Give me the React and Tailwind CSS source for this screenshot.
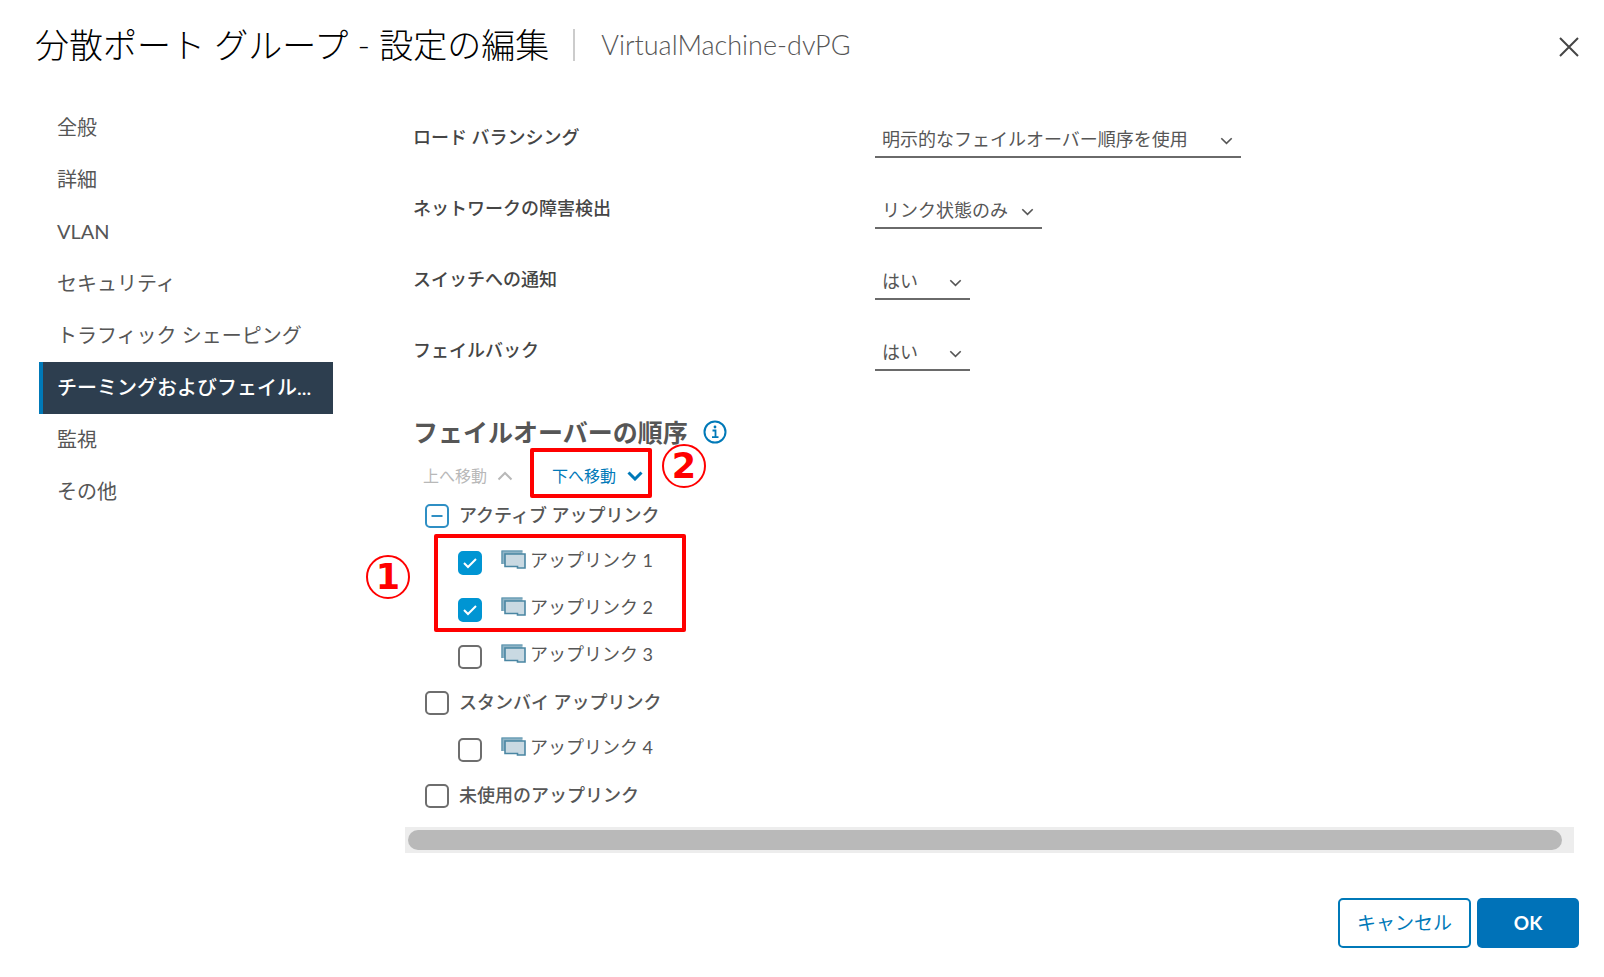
import { useEffect, useRef } from "react";

const navItems = [
  "全般",
  "詳細",
  "VLAN",
  "セキュリティ",
  "トラフィック シェーピング",
  "チーミングおよびフェイル...",
  "監視",
  "その他",
];

const settings = [
  { id: "lb", label: "ロード バランシング", value: "明示的なフェイルオーバー順序を使用", width: "w-[366px]" },
  { id: "detect", label: "ネットワークの障害検出", value: "リンク状態のみ", width: "w-[167px]" },
  { id: "notify", label: "スイッチへの通知", value: "はい", width: "w-[95px]" },
  { id: "failback", label: "フェイルバック", value: "はい", width: "w-[95px]" },
];

const uplinks = [
  { id: "active", label: "アクティブ アップリンク", group: true, state: "mixed" },
  { id: "u1", label: "アップリンク 1", state: "on" },
  { id: "u2", label: "アップリンク 2", state: "on" },
  { id: "u3", label: "アップリンク 3", state: "off" },
  { id: "standby", label: "スタンバイ アップリンク", group: true, state: "off" },
  { id: "u4", label: "アップリンク 4", state: "off" },
  { id: "unused", label: "未使用のアップリンク", group: true, state: "off" },
];

function Chevron({ up = false, className = "", stroke = 2 }) {
  return (
    <svg viewBox="0 0 16 10" className={className} fill="none" stroke="currentColor" strokeWidth={stroke} aria-hidden="true">
      <path d={up ? "M1.5 8.5 8 2l6.5 6.5" : "M1.5 1.5 8 8l6.5-6.5"} />
    </svg>
  );
}

function PortIcon() {
  return (
    <svg viewBox="0 0 26 20" className="h-5 w-[26px] shrink-0" aria-hidden="true">
      <path d="M1.500 14V0.500H22.500V4H5V14Z" fill="#8fb4c6" />
      <path d="M2 14V1H22.500" fill="none" stroke="#5b93ad" strokeWidth="1.200" />
      <path d="M5 4H25V18H17.500V16.500H5Z" fill="#c9d9e2" stroke="#4a86a3" strokeWidth="1.600" />
    </svg>
  );
}

function Checkbox({ id, state }) {
  const ref = useRef(null);
  useEffect(() => {
    ref.current.indeterminate = state === "mixed";
  }, [state]);
  const look =
    state === "on"
      ? "bg-[#0095d3] border-[#0095d3]"
      : state === "mixed"
        ? "bg-white border-[#2f8fc4]"
        : "bg-white border-[#6e6e6e]";
  return (
    <span className="relative block size-6 shrink-0">
      <input
        ref={ref}
        id={id}
        type="checkbox"
        defaultChecked={state === "on"}
        className={`block size-6 appearance-none rounded-[5px] border-2 ${look}`}
      />
      {state !== "off" && (
        <svg viewBox="0 0 24 24" className="pointer-events-none absolute inset-0 size-6" fill="none" strokeWidth="2" aria-hidden="true">
          {state === "on" ? <path d="M6 12l4 4 8-8" stroke="#fff" /> : <path d="M6.500 12h11" stroke="#2f8fc4" />}
        </svg>
      )}
    </span>
  );
}

function Marker({ children, className }) {
  return (
    <span
      className={`absolute flex size-11 items-center justify-center rounded-full border-2 border-[#f00] bg-white font-['DejaVu_Sans',sans-serif] text-[35px] leading-none font-bold text-[#f00] ${className}`}
    >
      {children}
    </span>
  );
}

export default function App() {
  return (
    <div className="flex min-h-screen flex-col bg-white font-['Lato','Noto_Sans_CJK_JP',sans-serif] text-[#565656]">
      <header className="flex h-[90px] items-center pr-[23px] pl-[35px]">
        <h1 className="text-[34px] leading-10 font-light text-black">分散ポート グループ - 設定の編集</h1>
        <span className="ml-6 h-8 w-0.5 bg-[#ccc]" />
        <p className="ml-[26px] text-[27px] leading-8 font-light">VirtualMachine-dvPG</p>
        <button type="button" aria-label="閉じる" className="mt-1 ml-auto flex size-6 items-center justify-center text-[#454545]">
          <svg viewBox="0 0 24 24" className="size-6" fill="none" stroke="currentColor" strokeWidth="2" aria-hidden="true">
            <path d="M3 3l18 18M21 3 3 21" />
          </svg>
        </button>
      </header>

      <div className="flex pt-3 pr-[30px] pl-[39px]">
        <nav className="w-[294px] shrink-0">
          <ul>
            {navItems.map((item, i) => (
              <li key={item}>
                <a
                  href="#"
                  aria-current={i === 5 ? "page" : undefined}
                  className={`block h-[52px] border-l-4 pl-[14px] text-[20px] leading-[50px] whitespace-nowrap ${
                    i === 5 ? "border-[#0079b8] bg-[#2d3e4f] font-medium text-white" : "border-transparent"
                  }`}
                >
                  {item}
                </a>
              </li>
            ))}
          </ul>
        </nav>

        <main className="ml-[72px] min-w-0 flex-1">
          <div className="pl-2">
            {settings.map((s) => (
              <div key={s.id} className="grid h-[71px] grid-cols-[462px_1fr] items-start pt-5">
                <label htmlFor={s.id} className="text-[18px] leading-[30px] font-medium text-[#454545]">
                  {s.label}
                </label>
                <div className={`relative ${s.width}`}>
                  <select id={s.id} className="block h-9 w-full appearance-none border-b-2 border-[#6a6a6a] bg-transparent pl-[7px] text-[18px]">
                    <option>{s.value}</option>
                  </select>
                  <Chevron stroke={2} className="pointer-events-none absolute top-[15px] right-2 h-2 w-[13px]" />
                </div>
              </div>
            ))}

            <div className="mt-[30px] flex h-8 items-center gap-[15px]">
              <h2 className="text-[25px] leading-8 font-bold">フェイルオーバーの順序</h2>
              <svg viewBox="0 0 24 24" className="size-6" fill="none" stroke="#0079b8" role="img" aria-label="情報">
                <circle cx="12" cy="12" r="10.500" strokeWidth="2" />
                <path d="M9.500 10.500H12.500V17M9 17.200H15.500" strokeWidth="1.800" />
                <circle cx="12" cy="7" r="1.400" fill="#0079b8" stroke="none" />
              </svg>
            </div>

            <div className="mt-[13px] flex h-[30px] items-center pl-[10px] text-[16px]">
              <button type="button" disabled className="flex items-center gap-[10px] text-[#b8b8b8]">
                上へ移動
                <Chevron up className="h-[10px] w-4" />
              </button>
              <div className="relative ml-[39px]">
                <button type="button" className="flex items-center gap-[11px] text-[#0079b8]">
                  下へ移動
                  <Chevron stroke={3} className="h-[10px] w-4" />
                </button>
                <span className="pointer-events-none absolute -top-[16px] -left-[22px] h-[50px] w-[122px] rounded-xs border-4 border-[#f00]" />
                <Marker className="-top-5 left-[110px]">2</Marker>
              </div>
            </div>

            <ul className="relative mt-[2px] pl-3">
              {uplinks.map((u) => (
                <li key={u.id} className={`flex items-center ${u.group ? "h-[46px]" : "h-[47px] pl-[33px]"}`}>
                  <Checkbox id={u.id} state={u.state} />
                  <label
                    htmlFor={u.id}
                    className={`flex items-center gap-1 text-[18px] leading-7 ${u.group ? "ml-[10px] pb-0.5 font-medium" : "ml-[18px] pb-1.5"}`}
                  >
                    {!u.group && <PortIcon />}
                    {u.label}
                  </label>
                </li>
              ))}
              <li aria-hidden="true" className="pointer-events-none absolute top-[41px] left-[21px] h-[98px] w-[252px] rounded-xs border-4 border-[#f00]" />
              <li className="absolute top-[62px] -left-[47px]">
                <Marker className="top-0 left-0">1</Marker>
              </li>
            </ul>
          </div>

          <div className="mt-2 bg-[#ededed] py-[3px] pr-3 pl-[3px]">
            <div className="h-5 rounded-full bg-[#b9b9b9]" />
          </div>
        </main>
      </div>

      <footer className="mt-[45px] flex justify-end gap-[6px] pr-[25px]">
        <button type="button" className="h-[50px] w-[133px] rounded-[5px] border-2 border-[#0079b8] text-[19px] text-[#0079b8]">
          キャンセル
        </button>
        <button type="button" className="h-[50px] w-[102px] rounded-[5px] bg-[#0072b8] text-[19px] font-bold text-white">
          OK
        </button>
      </footer>
    </div>
  );
}
